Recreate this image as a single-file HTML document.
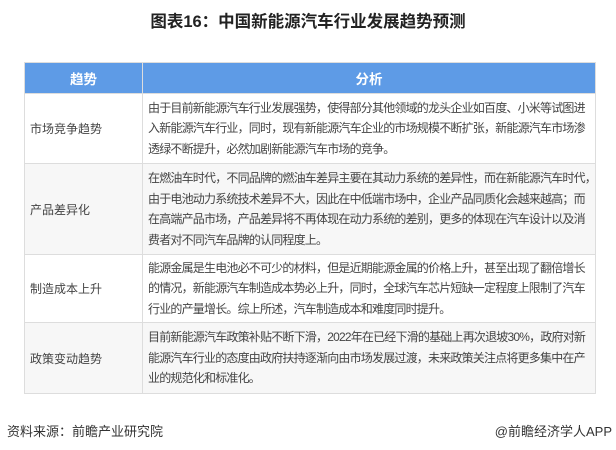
<!DOCTYPE html>
<html><head><meta charset="utf-8"><style>
body{margin:0;width:616px;height:450px;background:#fff;font-family:"Liberation Sans","Noto Sans CJK SC",sans-serif;color:#333;position:relative;overflow:hidden}
.t{position:absolute;top:8px;left:0;width:616px;text-align:center;font-weight:bold;font-size:16.5px;color:#222}
table{position:absolute;left:24px;top:62px;width:572px;border-collapse:collapse;font-size:12px;table-layout:fixed}
td,th{border:1px solid #ddd;padding:0;overflow:hidden}
th{background:#5e9be6;color:#fff;font-weight:bold;height:30px;font-size:13.5px}
td.l{padding-left:5px;white-space:nowrap;color:#444}
td.r{padding-left:5px;line-height:20.5px;white-space:nowrap;color:#444;letter-spacing:-0.8px}
.g td{background:#f7f7f7}
.f{position:absolute;top:421px;font-size:13px;color:#333}
</style></head><body>
<div class="t">图表16：中国新能源汽车行业发展趋势预测</div>
<table>
<colgroup><col style="width:118px"><col></colgroup>
<tr><th>趋势</th><th>分析</th></tr>
<tr style="height:70px"><td class="l">市场竞争趋势</td><td class="r">由于目前新能源汽车行业发展强势，使得部分其他领域的龙头企业如百度、小米等试图进<br>入新能源汽车行业，同时，现有新能源汽车企业的市场规模不断扩张，新能源汽车市场渗<br>透绿不断提升，必然加剧新能源汽车市场的竞争。</td></tr>
<tr class="g" style="height:91px"><td class="l">产品差异化</td><td class="r">在燃油车时代，不同品牌的燃油车差异主要在其动力系统的差异性，而在新能源汽车时代，<br>由于电池动力系统技术差异不大，因此在中低端市场中，企业产品同质化会越来越高；而<br>在高端产品市场，产品差异将不再体现在动力系统的差别，更多的体现在汽车设计以及消<br>费者对不同汽车品牌的认同程度上。</td></tr>
<tr style="height:68px"><td class="l">制造成本上升</td><td class="r">能源金属是生电池必不可少的材料，但是近期能源金属的价格上升，甚至出现了翻倍增长<br>的情况，新能源汽车制造成本势必上升，同时，全球汽车芯片短缺一定程度上限制了汽车<br>行业的产量增长。综上所述，汽车制造成本和难度同时提升。</td></tr>
<tr class="g" style="height:71px"><td class="l">政策变动趋势</td><td class="r">目前新能源汽车政策补贴不断下滑，2022年在已经下滑的基础上再次退坡30%，政府对新<br>能源汽车行业的态度由政府扶持逐渐向由市场发展过渡，未来政策关注点将更多集中在产<br>业的规范化和标准化。</td></tr>
</table>
<div class="f" style="left:7px">资料来源：前瞻产业研究院</div>
<div class="f" style="right:4px">@前瞻经济学人APP</div>
</body></html>
